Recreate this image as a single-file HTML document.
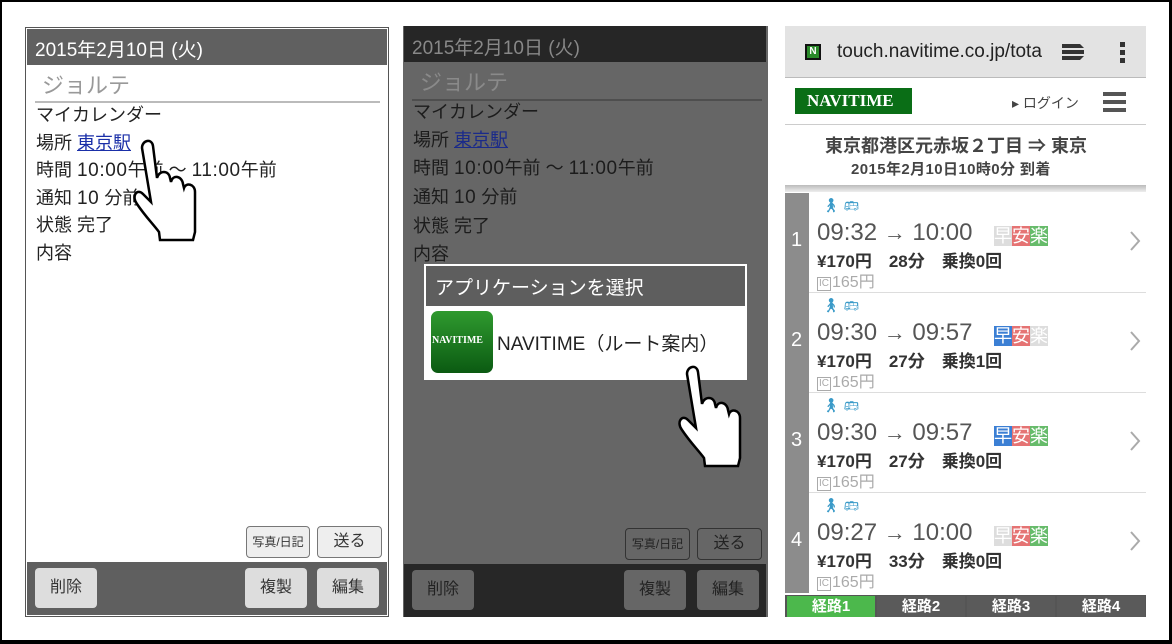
<!DOCTYPE html>
<html><head><meta charset="utf-8"><style>
*{margin:0;padding:0;box-sizing:border-box}
body{width:1172px;height:644px;background:#fff;position:relative;overflow:hidden;font-family:"Liberation Sans","Noto Sans CJK JP",sans-serif}
.a{position:absolute}
.t{position:absolute;white-space:nowrap}
.btn{position:absolute;border-radius:4px;text-align:center;font-size:16px}
.l{font-size:19px;letter-spacing:0.6px}
.ic{display:inline-block;border:1px solid #aaa;font-size:10px;line-height:12px;width:14px;height:14px;text-align:center;vertical-align:1px;margin-right:1px}
</style></head><body>
<div class="a" style="left:0;top:0;width:1172px;height:2px;background:#000"></div>
<div class="a" style="left:0;top:640px;width:1172px;height:4px;background:#000"></div>
<div class="a" style="left:0;top:0;width:2px;height:644px;background:#000"></div>
<div class="a" style="left:1169px;top:0;width:3px;height:644px;background:#000"></div>

<!-- Panel 1 -->
<div class="a" style="left:25px;top:27px;width:364px;height:590px;border:1px solid #555;background:#fff"></div>
<div class="a" style="left:27px;top:29px;width:360px;height:36px;background:#606060"></div>
<div class="t" style="left:35px;top:35px;font-size:19px;color:#fff">2015年2月10日 (火)</div>
<div class="t" style="left:42px;top:68px;font-size:22px;color:#999">ジョルテ</div>
<div class="a" style="left:35px;top:101px;width:345px;height:2px;background:#bbb"></div>
<div style="position:absolute;left:36px;top:102px;font-size:18px;line-height:27.5px;color:#222;white-space:nowrap">
マイカレンダー<br>場所 <span style="color:#1a2fa8;text-decoration:underline">東京駅</span><br>時間 <span class="l">10:00</span>午前 ～ <span class="l">11:00</span>午前<br>通知 <span class="l">10</span> 分前<br>状態 完了<br>内容</div>
<div class="btn" style="left:246px;top:526px;width:64px;height:32px;border:1px solid #777;background:#eee;font-size:12px;line-height:30px;color:#333">写真/日記</div>
<div class="btn" style="left:317px;top:526px;width:65px;height:32px;border:1px solid #777;background:#eee;line-height:30px;color:#333">送る</div>
<div class="a" style="left:27px;top:562px;width:360px;height:53px;background:#5f5f5f"></div>
<div class="btn" style="left:35px;top:568px;width:62px;height:40px;background:#ddd;line-height:40px;color:#333">削除</div>
<div class="btn" style="left:245px;top:568px;width:62px;height:40px;background:#ddd;line-height:40px;color:#333">複製</div>
<div class="btn" style="left:317px;top:568px;width:62px;height:40px;background:#ddd;line-height:40px;color:#333">編集</div>

<!-- Panel 2 -->
<div class="a" style="left:403px;top:26px;width:365px;height:591px;background:#666"></div>
<div class="a" style="left:404px;top:26px;width:362px;height:36px;background:#262626"></div>
<div class="t" style="left:412px;top:33px;font-size:19px;color:#888">2015年2月10日 (火)</div>
<div class="t" style="left:420px;top:65px;font-size:22px;color:#8a8a8a">ジョルテ</div>
<div class="a" style="left:412px;top:99px;width:350px;height:2px;background:#4e4e4e"></div>
<div style="position:absolute;left:413px;top:98px;font-size:18px;line-height:28px;color:#1c1c1c;white-space:nowrap">
マイカレンダー<br>場所 <span style="color:#1a2a8a;text-decoration:underline">東京駅</span><br>時間 <span class="l">10:00</span>午前 ～ <span class="l">11:00</span>午前<br>通知 <span class="l">10</span> 分前<br>状態 完了<br>内容</div>
<div class="a" style="left:424px;top:264px;width:323px;height:116px;border:2px solid #fff;background:#fff"></div>
<div class="a" style="left:426px;top:266px;width:319px;height:40px;background:#5e5e5e"></div>
<div class="t" style="left:435px;top:273px;font-size:19px;color:#fff">アプリケーションを選択</div>
<div class="a" style="left:431px;top:311px;width:62px;height:62px;border-radius:7px;background:linear-gradient(#2f9a2f,#0b5a12)"></div>
<div class="t" style="left:432px;top:335px;font-size:10px;font-family:'Liberation Serif',serif;font-weight:bold;color:#fff">NAVITIME</div>
<div class="t" style="left:497px;top:329px;font-size:19px;color:#222">NAVITIME（ルート案内）</div>
<div class="btn" style="left:625px;top:528px;width:65px;height:32px;border:1px solid #333;background:#666;font-size:12px;line-height:30px;color:#222">写真/日記</div>
<div class="btn" style="left:697px;top:528px;width:65px;height:32px;border:1px solid #333;background:#666;line-height:30px;color:#222">送る</div>
<div class="a" style="left:404px;top:564px;width:362px;height:53px;background:#272727"></div>
<div class="btn" style="left:412px;top:570px;width:62px;height:40px;background:#666;line-height:40px;color:#222">削除</div>
<div class="btn" style="left:624px;top:570px;width:62px;height:40px;background:#666;line-height:40px;color:#222">複製</div>
<div class="btn" style="left:697px;top:570px;width:62px;height:40px;background:#666;line-height:40px;color:#222">編集</div>

<!-- Panel 3 -->
<div class="a" style="left:785px;top:26px;width:361px;height:52px;background:#e3e3e3;border-bottom:1px solid #bbb"></div>
<div class="a" style="left:805px;top:44px;width:16px;height:16px;border:2px solid #111;background:#2a8a2a;color:#fff;font-size:10px;text-align:center;line-height:12px;font-weight:bold">N</div>
<div class="t" style="left:837px;top:41px;font-size:19px;color:#222">touch.navitime.co.jp/tota</div>
<svg class="a" style="left:1062px;top:42px" width="24" height="20"><path d="M0 2h18l4 4H0zM0 8h22v4H0zM0 14h22l-4 4H0z" fill="#333"/></svg>
<div class="a" style="left:1120px;top:42px;width:5px;height:5px;background:#333"></div>
<div class="a" style="left:1120px;top:50px;width:5px;height:5px;background:#333"></div>
<div class="a" style="left:1120px;top:58px;width:5px;height:5px;background:#333"></div>
<div class="a" style="left:795px;top:88px;width:117px;height:26px;background:#0a6e16"></div>
<div class="t" style="left:807px;top:91px;font-size:17px;font-family:'Liberation Serif',serif;font-weight:bold;color:#fff">NAVITIME</div>
<div class="t" style="left:1012px;top:93px;font-size:14px;color:#444">▸ ログイン</div>
<div class="a" style="left:1103px;top:92px;width:23px;height:4px;background:#555"></div>
<div class="a" style="left:1103px;top:100px;width:23px;height:4px;background:#555"></div>
<div class="a" style="left:1103px;top:108px;width:23px;height:4px;background:#555"></div>
<div class="a" style="left:785px;top:124px;width:361px;height:1px;background:#ccc"></div>
<div class="t" style="left:825px;top:132px;font-size:18px;font-weight:bold;color:#444">東京都港区元赤坂２丁目 ⇒ 東京</div>
<div class="t" style="left:851px;top:158px;font-size:15px;font-weight:bold;color:#444;letter-spacing:0.4px">2015年2月10日10時0分 到着</div>
<div class="a" style="left:785px;top:185px;width:361px;height:7px;background:linear-gradient(#bbb,#eee)"></div>

<div class="a" style="left:785px;top:193px;width:24px;height:400px;background:#8c8c8c"></div>
<div class="a" style="left:809px;top:292px;width:337px;height:1px;background:#ddd"></div>
<div class="a" style="left:809px;top:392px;width:337px;height:1px;background:#ddd"></div>
<div class="a" style="left:809px;top:492px;width:337px;height:1px;background:#ddd"></div>

<div class="t" style="left:791px;top:229px;font-size:20px;color:#fff">1</div>
<div class="t" style="left:791px;top:329px;font-size:20px;color:#fff">2</div>
<div class="t" style="left:791px;top:429px;font-size:20px;color:#fff">3</div>
<div class="t" style="left:791px;top:529px;font-size:20px;color:#fff">4</div>

<div class="t" style="left:822px;top:197px;font-size:14px;color:#3a9ac8">🚶︎ <span style="font-size:12px">🚌︎</span></div>
<div class="t" style="left:817px;top:219px;font-size:24px;color:#555">09:32 <span style="font-size:22px">→</span> 10:00</div>
<div class="t" style="left:994px;top:222px;font-size:18px;color:#fff"><span style="background:#ddd">早</span><span style="background:#e57373">安</span><span style="background:#66bb6a">楽</span></div>
<div class="t" style="left:817px;top:247px;font-size:17px;font-weight:bold;color:#333">¥170円　28分　乗換0回</div>
<div class="t" style="left:817px;top:268px;font-size:16px;color:#aaa"><span class="ic">IC</span>165円</div>

<div class="t" style="left:822px;top:297px;font-size:14px;color:#3a9ac8">🚶︎ <span style="font-size:12px">🚌︎</span></div>
<div class="t" style="left:817px;top:319px;font-size:24px;color:#555">09:30 <span style="font-size:22px">→</span> 09:57</div>
<div class="t" style="left:994px;top:322px;font-size:18px;color:#fff"><span style="background:#3b7fd4">早</span><span style="background:#e57373">安</span><span style="background:#ddd">楽</span></div>
<div class="t" style="left:817px;top:347px;font-size:17px;font-weight:bold;color:#333">¥170円　27分　乗換1回</div>
<div class="t" style="left:817px;top:368px;font-size:16px;color:#aaa"><span class="ic">IC</span>165円</div>

<div class="t" style="left:822px;top:397px;font-size:14px;color:#3a9ac8">🚶︎ <span style="font-size:12px">🚌︎</span></div>
<div class="t" style="left:817px;top:419px;font-size:24px;color:#555">09:30 <span style="font-size:22px">→</span> 09:57</div>
<div class="t" style="left:994px;top:422px;font-size:18px;color:#fff"><span style="background:#3b7fd4">早</span><span style="background:#e57373">安</span><span style="background:#66bb6a">楽</span></div>
<div class="t" style="left:817px;top:447px;font-size:17px;font-weight:bold;color:#333">¥170円　27分　乗換0回</div>
<div class="t" style="left:817px;top:468px;font-size:16px;color:#aaa"><span class="ic">IC</span>165円</div>

<div class="t" style="left:822px;top:497px;font-size:14px;color:#3a9ac8">🚶︎ <span style="font-size:12px">🚌︎</span></div>
<div class="t" style="left:817px;top:519px;font-size:24px;color:#555">09:27 <span style="font-size:22px">→</span> 10:00</div>
<div class="t" style="left:994px;top:522px;font-size:18px;color:#fff"><span style="background:#ddd">早</span><span style="background:#e57373">安</span><span style="background:#66bb6a">楽</span></div>
<div class="t" style="left:817px;top:547px;font-size:17px;font-weight:bold;color:#333">¥170円　33分　乗換0回</div>
<div class="t" style="left:817px;top:568px;font-size:16px;color:#aaa"><span class="ic">IC</span>165円</div>

<svg class="a" style="left:1128px;top:230px" width="14" height="330"><g fill="none" stroke="#aaa" stroke-width="2"><path d="M3 2l8 9-8 9"/><path d="M3 102l8 9-8 9"/><path d="M3 202l8 9-8 9"/><path d="M3 302l8 9-8 9"/></g></svg>

<div class="a" style="left:785px;top:595px;width:361px;height:22px;background:#555"></div>
<div class="t" style="left:787px;top:596px;width:88px;height:21px;background:#4cb84c;color:#fff;font-size:15px;font-weight:bold;text-align:center;line-height:21px">経路1</div>
<div class="t" style="left:877px;top:596px;width:88px;height:21px;background:#5a5a5a;color:#fff;font-size:15px;font-weight:bold;text-align:center;line-height:21px">経路2</div>
<div class="t" style="left:967px;top:596px;width:88px;height:21px;background:#5a5a5a;color:#fff;font-size:15px;font-weight:bold;text-align:center;line-height:21px">経路3</div>
<div class="t" style="left:1057px;top:596px;width:88px;height:21px;background:#5a5a5a;color:#fff;font-size:15px;font-weight:bold;text-align:center;line-height:21px">経路4</div>

<!-- hands -->
<svg class="a" style="left:120px;top:130px" width="90" height="120"><g transform="translate(25,10)"><path d="M-3 8C-3 0 7-2 8 6L12 38C14 30 24 30 25 38L26 42C28 34 37 36 38 44L39 48C41 42 50 44 50 52L50 92 48 100 15 100 14 92C8 84 0 76-8 64-14 56-8 48-2 54L6 62Z" fill="#fff" stroke="#000" stroke-width="2.5"/></g></svg>
<svg class="a" style="left:665px;top:356px" width="90" height="120"><g transform="translate(25,10)"><path d="M-3 8C-3 0 7-2 8 6L12 38C14 30 24 30 25 38L26 42C28 34 37 36 38 44L39 48C41 42 50 44 50 52L50 92 48 100 15 100 14 92C8 84 0 76-8 64-14 56-8 48-2 54L6 62Z" fill="#fff" stroke="#000" stroke-width="2.5"/></g></svg>
</body></html>
